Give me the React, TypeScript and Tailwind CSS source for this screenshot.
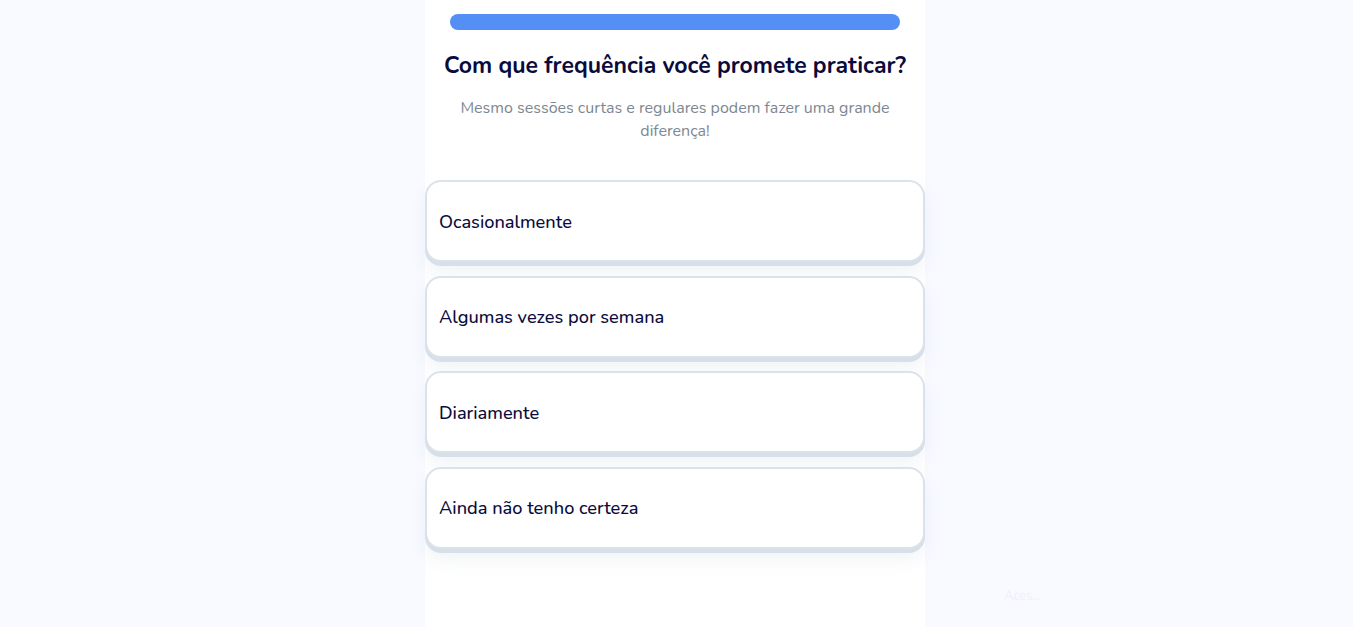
import React from "react";

const options = [
  "Ocasionalmente",
  "Algumas vezes por semana",
  "Diariamente",
  "Ainda não tenho certeza",
];

export default function App() {
  return (
    <div
      className="min-h-[627px] w-full bg-[#f8faff] flex justify-center pr-[3px] relative"
      style={{ fontFamily: '"Nunito", "Noto Sans", "Open Sans", sans-serif' }}
    >
      <div className="w-[500px] bg-white min-h-[627px] flex flex-col">
        <div className="px-[25px] pt-[14px]">
          <div className="h-[16px] w-full rounded-full bg-[#548ff6]" />
        </div>
        <h1 className="mt-[20px] text-center text-[23px] leading-[32px] font-bold text-[#0a0b3c]">
          Com que frequência você promete praticar?
        </h1>
        <p className="mt-[15px] mx-auto w-[460px] text-center text-[16px] leading-[23px] text-[#7d8791]">
          Mesmo sessões curtas e regulares podem fazer uma grande diferença!
        </p>
        <div className="mt-[37px] flex flex-col gap-[13.5px]">
          {options.map((o) => (
            <button
              key={o}
              className="h-[82px] w-full rounded-[16px] border-2 border-[#dbe3ea] bg-white px-[12px] pt-[3px] text-left text-[18.2px] font-medium text-[#0a0b3c] shadow-[0_4px_0_#d7e0e8,0_10px_18px_rgba(190,200,220,0.22)]"
            >
              {o}
            </button>
          ))}
        </div>
      </div>
      <div className="absolute left-[1004px] top-[587px] text-[13px] text-[#eef0f7]">
        Aces...
      </div>
    </div>
  );
}
